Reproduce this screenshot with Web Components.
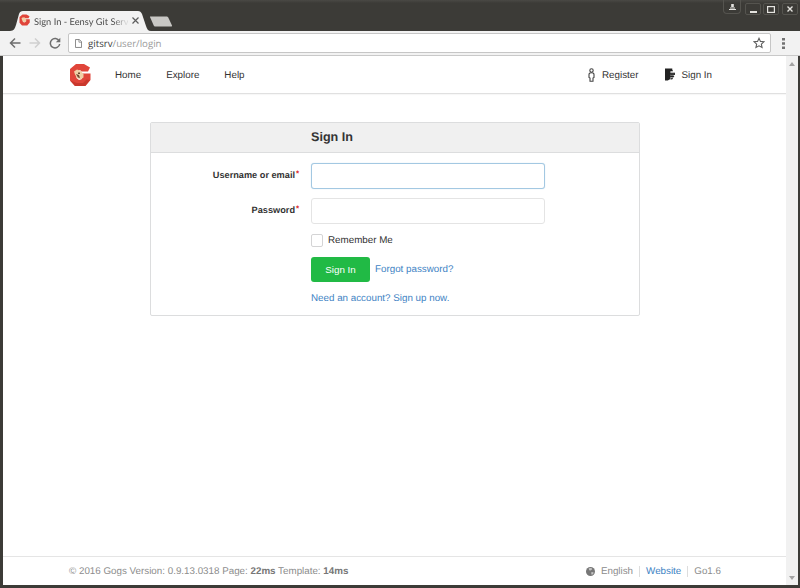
<!DOCTYPE html>
<html lang="en">
<head>
<meta charset="utf-8">
<title>Sign In - Eensy Git Service</title>
<style>
  html, body { margin: 0; height: 100%; overflow: hidden; background: #3c3b37; }
  body { font-family: "Liberation Sans", Arial, sans-serif; text-rendering: geometricPrecision; }
</style>
</head>
<body>
<browser-window>
  <tab-strip slot="strip" title-text="Sign In - Eensy Git Serv"></tab-strip>
  <browser-toolbar slot="toolbar" host-name="gitsrv" path="/user/login"></browser-toolbar>
  <gogs-nav></gogs-nav>
  <login-card></login-card>
  <gogs-footer></gogs-footer>
</browser-window>

<script>
// small helper so every element reads the same
function shadow(el, html) {
  el.attachShadow({ mode: 'open' }).innerHTML = html;
}

const GOGS_LOGO = `
  <svg viewBox="0 0 22 24" width="22" height="24">
    <path d="M7 1h8l6 3.500-2 4h-6.500L11 7 7.500 9v6l2.500 2 3-1v-2h-2v-3.500h10.500V17l-5 6H6l-5-5.500V6z" fill="#e0453a"/>
    <path d="M1 17.500 6 23h10l5-6-3.500-.5L14 20H8z" fill="#c9382d"/>
    <path d="M5 8.500l3-2 4 1.500 2.500 3.500v3l-3 2-3.500-1.500L6 11.500z" fill="#f0cfa6"/>
    <path d="M9 9.500h2v1.600H9zM7 11l3 1 1 3-2-.5z" fill="#6d4a32"/>
  </svg>`;

class BrowserWindow extends HTMLElement {
  constructor() {
    super();
    shadow(this, `
      <style>
        :host { display: flex; flex-direction: column; height: 585px; padding: 0 3px; box-sizing: border-box; }
        .page { flex: 1; display: flex; min-height: 0; background: #fff; margin-right: -1px; }
        .content { flex: 1; display: flex; flex-direction: column; min-width: 0; }
        .bar { width: 12px; flex: none; background: #f1f1f1; display: flex; flex-direction: column; justify-content: space-between; align-items: center; padding: 6px 0 5px; box-sizing: border-box; }
        .bar i { width: 0; height: 0; border: 3px solid transparent; }
        .bar .up { border-bottom: 4px solid #a3a3a3; border-top: 0; }
        .bar .down { border-top: 4px solid #a3a3a3; border-bottom: 0; }
      </style>
      <slot name="strip"></slot>
      <slot name="toolbar"></slot>
      <div class="page">
        <div class="content"><slot></slot></div>
        <div class="bar"><i class="up"></i><i class="down"></i></div>
      </div>`);
  }
}

class TabStrip extends HTMLElement {
  constructor() {
    super();
    shadow(this, `
      <style>
        :host { display: flex; height: 31px; margin: 0 -3px; background: linear-gradient(#4a4945 0, #3c3b37 3px); position: relative; font-family: Lato, "Open Sans", sans-serif; }
        .tab { position: absolute; left: 10px; bottom: 0; width: 141px; height: 20px; }
        .tab svg.shape { position: absolute; inset: 0; }
        .label { position: absolute; left: 24px; top: 3px; width: 94px; white-space: nowrap; font-size: 9.300px; line-height: 15px; color: #4c4c4c; -webkit-mask-image: linear-gradient(90deg, #000 84%, rgba(0,0,0,.15) 98%); }
        .fav { position: absolute; left: 9px; top: 3px; }
        .x { position: absolute; left: 122px; top: 6px; }
        .new { position: absolute; left: 150px; top: 16px; }
        .ctl { position: absolute; top: 3px; height: 10px; width: 14px; border: 1px solid #55544f; border-radius: 2px; display: flex; align-items: center; justify-content: center; }
        .user { top: 0; left: 723px; width: 16px; height: 13px; border-radius: 0 0 4px 4px; border-top: 0; }
      </style>
      <div class="tab">
        <svg class="shape" width="141" height="20"><path d="M0 20 C4 20 5 17 6 14 L9 3 C9.600 1 11 0 13 0 H128 C130 0 131 1 132 3 L136 15 C137 18 138 20 141 20Z" fill="#f2f2f2"/></svg>
        <span class="fav"><svg viewBox="0 0 22 24" width="11" height="12" style="display:block">
          <path d="M7 1h8l6 3.500-2 4h-6.500L11 7 7.500 9v6l2.500 2 3-1v-2h-2v-3.500h10.500V17l-5 6H6l-5-5.500V6z" fill="#e0453a"/>
          <path d="M5 8.500l3-2 4 1.500 2.500 3.500v3l-3 2-3.500-1.500L6 11.500z" fill="#f0cfa6"/>
        </svg></span>
        <span class="label"></span>
        <svg class="x" width="7" height="7"><path d="M.5.5l6 6M6.500.5l-6 6" stroke="#5d5d5d" stroke-width="1.200"/></svg>
      </div>
      <svg class="new" width="23" height="11"><path d="M0 .5h16.500c1 0 1.500.5 2 1.500l3.500 7.500c.2.700-.2 1-1 1H5.500c-1 0-1.500-.5-2-1.500L.2 1.500C0 .8 0 .5 0 .5z" fill="#c8c7c4"/></svg>
      <span class="ctl user"><svg width="7" height="6"><path d="M2.200 0h2.600v3H2.200zM1 3.500h5v1H1zM0 5h7v1H0z" fill="#e4e3df"/></svg></span>
      <span class="ctl" style="left:745px"><svg width="7" height="8"><path d="M0 6h7v2H0z" fill="#e4e3df"/></svg></span>
      <span class="ctl" style="left:763px"><svg width="8" height="7"><rect x=".6" y=".6" width="6.800" height="5.800" fill="none" stroke="#e4e3df" stroke-width="1.200"/></svg></span>
      <span class="ctl" style="left:782px"><svg width="6" height="6"><path d="M.5.5l5 5M5.500.5l-5 5" stroke="#e4e3df" stroke-width="1.400"/></svg></span>`);
    this.shadowRoot.querySelector('.label').textContent = this.getAttribute('title-text');
  }
}

class BrowserToolbar extends HTMLElement {
  constructor() {
    super();
    shadow(this, `
      <style>
        :host { display: flex; align-items: center; height: 25px; margin: 0 -3px; padding: 2px 3px; box-sizing: border-box; background: #f2f2f2; border-bottom: 1px solid #c9c9c9; font-family: "Open Sans", "Noto Sans", sans-serif; }
        .btn { width: 20px; flex: none; display: flex; justify-content: center; }
        .nav { display: flex; padding-left: 3px; width: 62px; flex: none; margin-left: -1px; margin-right: 1px; }
        .box { flex: none; width: 703px; height: 20px; background: #fff; border: 1px solid #c6c6c6; border-radius: 2px; box-sizing: border-box; display: flex; align-items: center; padding: 0 5px; font-size: 9.700px; color: #9a9a9a; }
        .doc { margin: 0 6px 0 1px; display: flex; }
        .host { color: #404040; }
        .star { margin-left: auto; display: flex; }
        .menu { margin-left: 11px; display: flex; }
      </style>
      <div class="nav">
        <span class="btn"><svg width="12" height="12" viewBox="0 0 12 12"><path d="M11.500 6H1.500M6 1.500 1.500 6 6 10.500" fill="none" stroke="#6e6e6e" stroke-width="1.500"/></svg></span>
        <span class="btn"><svg width="12" height="12" viewBox="0 0 12 12"><path d="M.5 6h10M6 1.500 10.500 6 6 10.500" fill="none" stroke="#cfcfcf" stroke-width="1.500"/></svg></span>
        <span class="btn"><svg width="12" height="12" viewBox="0 0 12 12"><path d="M10.200 4A4.700 4.700 0 1 0 10.700 7" fill="none" stroke="#6e6e6e" stroke-width="1.500"/><path d="M11.300 .8v4.500H6.800z" fill="#6e6e6e"/></svg></span>
      </div>
      <div class="box">
        <span class="doc"><svg width="7" height="9" viewBox="0 0 8 10"><path d="M.5.5h4.500L7.500 3v6.500h-7z" fill="none" stroke="#777"/><path d="M4.500.5V3.500H7.500" fill="none" stroke="#777" stroke-width=".8"/></svg></span>
        <span class="host"></span><span class="path"></span>
        <span class="star"><svg width="12" height="12" viewBox="0 0 24 24"><path d="M12 2.500l2.900 6.300 6.900.8-5.100 4.700 1.400 6.800L12 17.700l-6.100 3.400 1.400-6.800L2.200 9.600l6.900-.8z" fill="none" stroke="#5f5f5f" stroke-width="2.200"/></svg></span>
      </div>
      <span class="menu"><svg width="3" height="11"><path d="M0 0h3v2.500H0zM0 4.200h3v2.500H0zM0 8.400h3v2.500H0z" fill="#727272"/></svg></span>`);
    this.shadowRoot.querySelector('.host').textContent = this.getAttribute('host-name');
    this.shadowRoot.querySelector('.path').textContent = this.getAttribute('path');
  }
}

class GogsNav extends HTMLElement {
  constructor() {
    super();
    shadow(this, `
      <style>
        :host { display: flex; align-items: center; height: 38px; flex: none; box-sizing: border-box; padding: 0 74px 0 66px; border-bottom: 1px solid #e0e0e0; box-shadow: 0 1px 1px rgba(0,0,0,.03); font-size: 9.800px; color: #333; }
        .logo { display: flex; width: 46px; flex: none; }
        a { color: inherit; text-decoration: none; display: flex; align-items: center; padding-top: 2px; }
        a + a { margin-left: 25px; }
        .right { margin-left: auto; display: flex; }
        .right a + a { margin-left: 27px; }
        .right svg { margin: 0 7px 2px 0; }
      </style>
      <span class="logo">${GOGS_LOGO}</span>
      <a href="#">Home</a><a href="#">Explore</a><a href="#">Help</a>
      <div class="right">
        <a href="#"><svg width="7" height="14" viewBox="0 0 7 14"><circle cx="3.500" cy="2.500" r="1.700" fill="none" stroke="#444" stroke-width="1.100"/><path d="M1 6.500C1 5 2 4.800 3.500 4.800S6 5 6 6.500v3L5 10v3.300H2V10L1 9.500z" fill="none" stroke="#444" stroke-width="1.100"/></svg>Register</a>
        <a href="#"><svg width="10" height="13" viewBox="0 0 11 13" style="margin-right:6px"><path d="M0 0h8v3H6v8.500L3 13H0z" fill="#222"/><path d="M6 5h5v1.500H6zM6 8h3.500v1.200H6zM8 1.500V3M8 10v1.500H6" stroke="#222" fill="#222" stroke-width=".9"/></svg>Sign In</a>
      </div>`);
  }
}

class LoginField extends HTMLElement {
  constructor() {
    super();
    const focused = this.hasAttribute('focused');
    const shade = focused
      ? 'border-color:#a3c8e2;box-shadow:0 0 1px rgba(133,183,217,.6)'
      : 'border-color:#e4e4e4';
    shadow(this, `
      <style>
        :host { display: flex; align-items: center; }
        label { width: 149px; flex: none; text-align: right; font-size: 9.200px; font-weight: 700; color: #333; white-space: nowrap; padding-bottom: 2px; }
        b { display: inline-block; color: #db2828; font-size: 8px; margin-left: 1px; width: 4px; text-align: left; position: relative; top: -2px; }
        input { margin: 0 0 0 11px; width: 234px; height: 26px; box-sizing: border-box; border: 1px solid; border-radius: 3px; background: #fff; outline: 0; padding: 0 8px; ${shade} }
      </style>
      <label><slot></slot><b>*</b></label>
      <input type="${this.getAttribute('type') || 'text'}">`);
  }
}

class LoginCard extends HTMLElement {
  constructor() {
    super();
    shadow(this, `
      <style>
        :host { display: block; width: 490px; flex: none; margin: 28px 0 0 147px; box-sizing: border-box; border: 1px solid #dcddde; border-radius: 2px; font-size: 9.800px; color: #333; }
        header { height: 30px; box-sizing: border-box; background: #f0f0f0; border-bottom: 1px solid #dcddde; padding: 0 0 2px 160px; display: flex; align-items: center; font-size: 12.600px; font-weight: 700; }
        .body { padding: 10px 0 0; display: flex; flex-direction: column; }
        login-field + login-field { margin-top: 9px; }
        .indent { margin-left: 160px; }
        .remember { display: flex; align-items: center; margin-top: 10px; height: 13px; }
        .check { width: 12px; height: 13px; box-sizing: border-box; border: 1px solid #d4d4d5; border-radius: 2px; background: #fff; margin-right: 5px; }
        .actions { display: flex; align-items: center; margin-top: 10px; }
        button { width: 59px; height: 25px; border: 0; border-radius: 3px; background: #21ba45; color: #fff; font: inherit; padding: 0; margin-right: 5px; }
        a { color: #4183c4; text-decoration: none; }
        .signup { margin: 11px 0 10px 160px; line-height: 12px; }
      </style>
      <header>Sign In</header>
      <div class="body">
        <login-field focused>Username or email</login-field>
        <login-field type="password">Password</login-field>
        <div class="indent remember"><span class="check"></span>Remember Me</div>
        <div class="indent actions"><button>Sign In</button><a href="#">Forgot password?</a></div>
        <a class="signup" href="#">Need an account? Sign up now.</a>
      </div>`);
  }
}

class GogsFooter extends HTMLElement {
  constructor() {
    super();
    shadow(this, `
      <style>
        :host { display: flex; align-items: center; flex: none; height: 29px; margin-top: auto; box-sizing: border-box; padding: 0 65px 0 66px; border-top: 1px solid #e5e5e5; font-size: 9.800px; color: #8c8c8c; }
        b { color: #777; }
        .right { margin-left: auto; display: flex; align-items: center; }
        .right svg { margin-right: 6px; }
        .sep { border-left: 1px solid #ddd; padding-left: 6px; margin-left: 6px; }
        a { color: #4183c4; text-decoration: none; }
      </style>
      <span>© 2016 Gogs Version: 0.9.13.0318 Page: <b>22ms</b> Template: <b>14ms</b></span>
      <div class="right">
        <svg width="9" height="9" viewBox="0 0 10 10"><circle cx="5" cy="5" r="5" fill="#777"/><path d="M3 1.500l3-.5 1 1.500-2 1.500-1.500-.5zM5.500 6l2.500-.5.500 1.500L6.500 9z" fill="#c5c5c5"/></svg>
        <span>English</span><a class="sep" href="#">Website</a><span class="sep">Go1.6</span>
      </div>`);
  }
}

customElements.define('browser-window', BrowserWindow);
customElements.define('tab-strip', TabStrip);
customElements.define('browser-toolbar', BrowserToolbar);
customElements.define('gogs-nav', GogsNav);
customElements.define('login-field', LoginField);
customElements.define('login-card', LoginCard);
customElements.define('gogs-footer', GogsFooter);
</script>
</body>
</html>
